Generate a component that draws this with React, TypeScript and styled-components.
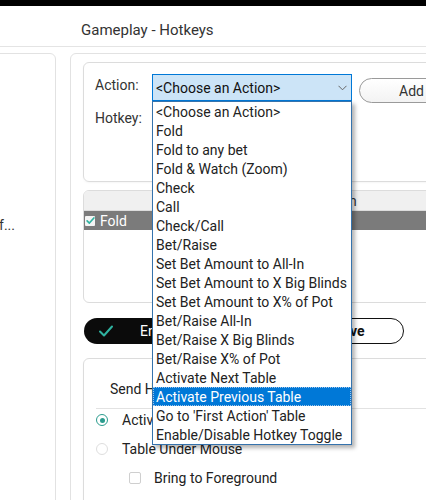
import React from "react";
import styled, { createGlobalStyle } from "styled-components";

const GlobalStyle = createGlobalStyle`
  html, body {
    margin: 0;
    padding: 0;
    background: #fff;
  }
  body {
    font-family: Roboto, "Liberation Sans", Arial, sans-serif;
    color: #222;
    overflow: hidden;
  }
  * {
    box-sizing: border-box;
  }
`;

const Page = styled.div`
  width: 426px;
  height: 500px;
  overflow: hidden;
  background: #fff;
`;

const TopBar = styled.div`
  height: 6px;
  background: #000;
`;

const Header = styled.header`
  height: 41px;
  padding: 8px 0 0 81px;
  display: flex;
  align-items: center;
  border-bottom: 1px solid #e4e4e4;
`;

const Title = styled.h1`
  margin: 0;
  font-size: 15px;
  font-weight: 400;
  color: #333;
`;

const Body = styled.div`
  display: flex;
  gap: 14px;
  padding-top: 6px;
`;

const SidePanel = styled.aside`
  flex: none;
  width: 256px;
  height: 460px;
  margin-left: -200px;
  padding: 163px 40px 0 0;
  border: 1px solid #e2e2e2;
  border-radius: 6px;
`;

const SideItem = styled.div`
  font-size: 14px;
  line-height: 16px;
  color: #333;
  text-align: right;
  white-space: nowrap;
`;

const MainPanel = styled.main`
  flex: none;
  width: 420px;
  height: 460px;
  padding: 8px 0 0 12px;
  border: 1px solid #e2e2e2;
  border-radius: 6px;
  display: flex;
  flex-direction: column;
`;

const Card = styled.section<{ $height: number }>`
  flex: none;
  height: ${({ $height }) => $height}px;
  border: 1px solid #dcdcdc;
  border-radius: 6px;
  box-shadow: 0 1px 2px rgba(0, 0, 0, 0.04);
`;

const FormCard = styled(Card)`
  padding: 11px 0 0 11px;
`;

const FieldRow = styled.div<{ $gap?: number }>`
  display: flex;
  align-items: flex-start;
  margin-top: ${({ $gap }) => $gap ?? 0}px;
`;

const Label = styled.label<{ $offset?: number }>`
  flex: none;
  width: 57px;
  margin-top: ${({ $offset }) => $offset ?? 0}px;
  font-size: 14px;
  line-height: 16px;
  color: #333;
`;

const SelectWrap = styled.div`
  position: relative;
  flex: none;
  width: 200px;
`;

const SelectBox = styled.div`
  height: 27px;
  padding: 1px 4px 0 3px;
  display: flex;
  align-items: center;
  justify-content: space-between;
  border: 1px solid #0078d7;
  background: #cce4f7;
  font-size: 14px;
  color: #111;
`;

const OptionList = styled.ul`
  position: absolute;
  top: 27px;
  left: 0;
  z-index: 10;
  width: 200px;
  margin: 0;
  padding: 0;
  list-style: none;
  background: #fff;
  border: 1px solid #3573ad;
  box-shadow: 3px 3px 4px rgba(0, 0, 0, 0.3);
`;

const Option = styled.li<{ $active?: boolean }>`
  height: 19px;
  line-height: 20px;
  padding-left: 3px;
  font-size: 14px;
  white-space: nowrap;
  color: ${({ $active }) => ($active ? "#fff" : "#222")};
  background: ${({ $active }) => ($active ? "#0078d7" : "transparent")};
  outline: ${({ $active }) => ($active ? "1px dotted #9cc3ea" : "none")};
  outline-offset: -1px;
`;

const AddButton = styled.button`
  flex: none;
  width: 105px;
  height: 25px;
  margin: 4px 0 0 7px;
  border: 1px solid #9a9a9a;
  border-radius: 13px;
  background: linear-gradient(#ffffff, #f3f3f3);
  font-family: inherit;
  font-size: 14px;
  color: #333;
`;

const Table = styled.div`
  flex: none;
  height: 113px;
  margin-top: 8px;
  border: 1px solid #dcdcdc;
  border-radius: 6px;
  overflow: hidden;
`;

const TableHead = styled.div`
  height: 20px;
  display: grid;
  grid-template-columns: 167px 1fr;
  align-items: center;
  background: #f0f0f0;
  border-bottom: 1px solid #dcdcdc;
  font-size: 14px;
  color: #333;
`;

const HeadCell = styled.span<{ $indent: number }>`
  padding-left: ${({ $indent }) => $indent}px;
  white-space: nowrap;
`;

const TableRow = styled.div<{ $selected?: boolean }>`
  height: 19px;
  display: flex;
  align-items: center;
  gap: 5px;
  padding-left: 1px;
  background: ${({ $selected }) => ($selected ? "#7b7b7b" : "#fff")};
  color: ${({ $selected }) => ($selected ? "#fff" : "#222")};
  font-size: 14px;
`;

const RowCheck = styled.span`
  width: 10px;
  height: 10px;
  display: flex;
  align-items: center;
  justify-content: center;
  background: #f4f4f4;
  border-radius: 1px;
`;

const ButtonRow = styled.div`
  display: flex;
  gap: 12px;
  padding: 15px 0 0 1px;
`;

const PillButton = styled.button<{ $dark?: boolean; $width: number }>`
  flex: none;
  width: ${({ $width }) => $width}px;
  height: 26px;
  border-radius: 13px;
  display: flex;
  align-items: center;
  justify-content: ${({ $dark }) => ($dark ? "flex-start" : "center")};
  gap: 26px;
  padding: ${({ $dark }) => ($dark ? "0 0 0 14px" : "0 0 0 4px")};
  border: ${({ $dark }) => ($dark ? "none" : "1.5px solid #111")};
  background: ${({ $dark }) => ($dark ? "#0b0b0b" : "#fff")};
  color: ${({ $dark }) => ($dark ? "#fff" : "#111")};
  font-family: inherit;
  font-size: 14px;
  font-weight: ${({ $dark }) => ($dark ? 400 : 700)};
`;

const TargetCard = styled(Card)`
  margin-top: 14px;
  padding-left: 12px;
`;

const CardTitle = styled.div`
  padding: 22px 0 11px 14px;
  font-size: 14px;
  line-height: 16px;
  color: #222;
  border-bottom: 1px solid #e2e2e2;
`;

const OptionGroup = styled.div`
  display: flex;
  flex-direction: column;
  gap: 9px;
  padding-top: 1px;
`;

const Choice = styled.div<{ $indent?: number }>`
  height: 20px;
  display: flex;
  align-items: center;
  padding-left: ${({ $indent }) => $indent ?? 0}px;
  font-size: 14px;
  color: #222;
`;

const Radio = styled.span<{ $on?: boolean }>`
  flex: none;
  width: 12px;
  height: 12px;
  margin-right: 14px;
  border-radius: 50%;
  border: 1.5px solid ${({ $on }) => ($on ? "#2b9c8e" : "#dedede")};
  display: flex;
  align-items: center;
  justify-content: center;

  &::after {
    content: "";
    width: 5px;
    height: 5px;
    border-radius: 50%;
    background: ${({ $on }) => ($on ? "#2b9c8e" : "transparent")};
  }
`;

const Box = styled.span`
  flex: none;
  width: 12px;
  height: 12px;
  margin-right: 13px;
  border: 1px solid #cfcfcf;
  border-radius: 2px;
`;

const actions = [
  "<Choose an Action>",
  "Fold",
  "Fold to any bet",
  "Fold & Watch (Zoom)",
  "Check",
  "Call",
  "Check/Call",
  "Bet/Raise",
  "Set Bet Amount to All-In",
  "Set Bet Amount to X Big Blinds",
  "Set Bet Amount to X% of Pot",
  "Bet/Raise All-In",
  "Bet/Raise X Big Blinds",
  "Bet/Raise X% of Pot",
  "Activate Next Table",
  "Activate Previous Table",
  "Go to 'First Action' Table",
  "Enable/Disable Hotkey Toggle",
];

const Chevron = () => (
  <svg width="9" height="6" viewBox="0 0 9 6">
    <path d="M0.5 0.8 L4.5 4.8 L8.5 0.8" fill="none" stroke="#666" strokeWidth="1" />
  </svg>
);

const Tick: React.FC<{ size: number; width: number }> = ({ size, width }) => (
  <svg width={size} height={size} viewBox="0 0 16 16">
    <path
      d="M2 8.5 L6 12.5 L14 3.5"
      fill="none"
      stroke="#2fb3a1"
      strokeWidth={width}
      strokeLinecap="round"
      strokeLinejoin="round"
    />
  </svg>
);

const App: React.FC = () => {
  const current = "Activate Previous Table";

  return (
    <Page>
      <GlobalStyle />
      <TopBar />
      <Header>
        <Title>Gameplay - Hotkeys</Title>
      </Header>
      <Body>
        <SidePanel>
          <SideItem>Default Hotkey Set Of...</SideItem>
        </SidePanel>
        <MainPanel>
          <FormCard $height={120}>
            <FieldRow>
              <Label $offset={3}>Action:</Label>
              <SelectWrap>
                <SelectBox>
                  <span>&lt;Choose an Action&gt;</span>
                  <Chevron />
                </SelectBox>
                <OptionList>
                  {actions.map((a) => (
                    <Option key={a} $active={a === current}>
                      {a}
                    </Option>
                  ))}
                </OptionList>
              </SelectWrap>
              <AddButton>Add</AddButton>
            </FieldRow>
            <FieldRow $gap={7}>
              <Label>Hotkey:</Label>
            </FieldRow>
          </FormCard>

          <Table>
            <TableHead>
              <HeadCell $indent={72}>Action</HeadCell>
              <HeadCell $indent={0}>Key Combination</HeadCell>
            </TableHead>
            <TableRow $selected>
              <RowCheck>
                <Tick size={9} width={3} />
              </RowCheck>
              Fold
            </TableRow>
          </Table>

          <ButtonRow>
            <PillButton $dark $width={174}>
              <Tick size={16} width={2} />
              Enabled
            </PillButton>
            <PillButton $width={134}>Remove</PillButton>
          </ButtonRow>

          <TargetCard $height={200}>
            <CardTitle>Send Hotkey To</CardTitle>
            <OptionGroup>
              <Choice>
                <Radio $on />
                Active Table
              </Choice>
              <Choice>
                <Radio />
                Table Under Mouse
              </Choice>
              <Choice $indent={33}>
                <Box />
                Bring to Foreground
              </Choice>
            </OptionGroup>
          </TargetCard>
        </MainPanel>
      </Body>
    </Page>
  );
};

export default App;
